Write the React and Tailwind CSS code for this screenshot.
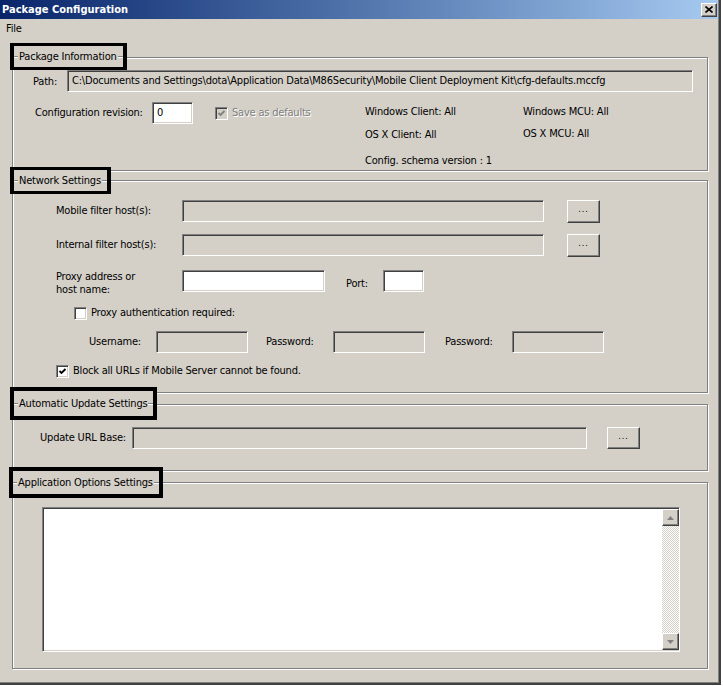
import React from "react";

// classic win2k bevels
const sunken =
    "border border-t-[#808080] border-l-[#808080] border-r-white border-b-white shadow-[inset_1px_1px_0_#404040,inset_-1px_-1px_0_#d4d0c8]";
const raised =
    "border border-t-white border-l-white border-r-[#404040] border-b-[#404040] shadow-[inset_-1px_-1px_0_#808080,inset_1px_1px_0_#d4d0c8]";

function Etch({ className }) {
    return (
        <span
            className={`h-[2px] border-t border-t-[#808080] border-b border-b-white ${className}`}
        />
    );
}

function Group({ title, className, legendClass, children }) {
    return (
        <div
            className={`ml-[12px] w-[696px] shrink-0 border border-[#808080] shadow-[inset_1px_1px_0_#fff,1px_1px_0_#fff] ${className}`}
        >
            {/* legend, boxed in black as in the screenshot */}
            <div
                className={`flex w-fit items-center border-black bg-[#d4d0c8] ${legendClass}`}
            >
                <Etch className="w-[4px]" />
                <span className="px-[1px] leading-[13px]">{title}</span>
                <Etch className="w-[5px]" />
            </div>
            {children}
        </div>
    );
}

function Field({ className, white, children }) {
    return (
        <div
            className={`flex h-[22px] shrink-0 items-center pl-[4px] pt-[1px] ${sunken} ${
                white ? "bg-white" : "bg-[#d4d0c8]"
            } ${className}`}
        >
            {children}
        </div>
    );
}

function Dots({ className }) {
    return (
        <div
            className={`flex w-[33px] shrink-0 items-center justify-center bg-[#d4d0c8] pb-[2px] text-[9px] tracking-[1px] ${raised} ${className}`}
        >
            ...
        </div>
    );
}

function Check({ checked, disabled, className }) {
    return (
        <span
            className={`flex h-[13px] w-[13px] shrink-0 items-center justify-center ${sunken} ${
                disabled ? "bg-[#d4d0c8]" : "bg-white"
            } ${className}`}
        >
            {checked && (
                <svg width="9" height="9" viewBox="0 0 9 9">
                    <polyline
                        points="1.5,4 3.5,6 7.5,2"
                        fill="none"
                        stroke={disabled ? "#808080" : "#000"}
                        strokeWidth="1.8"
                    />
                </svg>
            )}
        </span>
    );
}

function Arrow({ up }) {
    return (
        <div
            className={`flex h-[17px] w-[17px] shrink-0 items-center justify-center bg-[#d4d0c8] ${raised}`}
        >
            <svg width="7" height="4" viewBox="0 0 7 4">
                <polygon
                    points={up ? "0,4 7,4 3.5,0" : "0,0 7,0 3.5,4"}
                    fill="#808080"
                />
            </svg>
        </div>
    );
}

export default function App() {
    return (
        <div className="h-[686px] w-[723px] bg-white font-['DejaVu_Sans_Condensed','DejaVu_Sans',sans-serif] text-[11px] tracking-[-0.2px] text-black">
            <div className="flex h-[685px] w-[721px] flex-col overflow-hidden border-r-2 border-b-2 border-[#404040] bg-[#d4d0c8] shadow-[inset_-1px_-1px_0_#808080]">
                {/* Title bar */}
                <div className="flex h-[19px] w-[718px] shrink-0 items-center justify-between bg-linear-to-r from-[#0a246a] to-[#a6caf0] pl-[2px] pr-[1px]">
                    <span className="pt-[2px] font-bold tracking-normal text-white">
                        Package Configuration
                    </span>
                    <div
                        className={`flex h-[14px] w-[16px] items-center justify-center bg-[#d4d0c8] ${raised}`}
                    >
                        <svg width="8" height="7" viewBox="0 0 8 7">
                            <path
                                d="M0.5 0.5 L7.5 6.5 M7.5 0.5 L0.5 6.5"
                                stroke="#000"
                                strokeWidth="1.6"
                            />
                        </svg>
                    </div>
                </div>

                {/* Menu */}
                <div className="flex h-[19px] shrink-0 items-center pl-[6px] pt-[2px]">
                    File
                </div>

                {/* Package Information */}
                <Group
                    title="Package Information"
                    className="mt-[19px] h-[114px]"
                    legendClass="-mt-[15px] -ml-[3px] h-[27px] border-x-[4px] border-y-[3px]"
                >
                    <div className="flex h-[22px] items-center">
                        <span className="w-[54px] shrink-0 pl-[20px] pt-[2px]">Path:</span>
                        <Field className="w-[626px]">
                            C:\Documents and Settings\dota\Application Data\M86Security\Mobile
                            Client Deployment Kit\cfg-defaults.mccfg
                        </Field>
                    </div>
                    <div className="mt-[10px] flex items-start">
                        <div className="flex h-[22px] w-[352px] shrink-0 items-center">
                            <span className="w-[139px] shrink-0 pl-[22px]">
                                Configuration revision:
                            </span>
                            <Field white className="w-[41px]">
                                0
                            </Field>
                            <Check checked disabled className="ml-[22px]" />
                            <span className="ml-[4px] text-[#808080] [text-shadow:1px_1px_0_#fff]">
                                Save as defaults
                            </span>
                        </div>
                        <div className="mt-[3px] grid grid-cols-[158px_auto] leading-[14px]">
                            <span>Windows Client: All</span>
                            <span>Windows MCU: All</span>
                            <span className="mt-[9px]">OS X Client: All</span>
                            <span className="mt-[8px]">OS X MCU: All</span>
                            <span className="mt-[12px]">
                                Config. schema version : 1
                            </span>
                        </div>
                    </div>
                </Group>

                {/* Network Settings */}
                <Group
                    title="Network Settings"
                    className="mt-[9px] h-[213px]"
                    legendClass="-mt-[14px] -ml-[3px] h-[27px] border-x-[4px] border-y-[3px]"
                >
                    <div className="mt-[6px] flex h-[22px] items-center">
                        <span className="w-[169px] shrink-0 pl-[43px]">
                            Mobile filter host(s):
                        </span>
                        <Field className="w-[362px]" />
                        <Dots className="ml-[23px] h-[23px]" />
                    </div>
                    <div className="mt-[12px] flex h-[22px] items-center">
                        <span className="w-[169px] shrink-0 pl-[43px]">
                            Internal filter host(s):
                        </span>
                        <Field className="w-[362px]" />
                        <Dots className="ml-[23px] h-[23px]" />
                    </div>
                    <div className="mt-[14px] flex h-[22px] items-start">
                        <span className="w-[169px] shrink-0 pl-[43px] leading-[13px]">
                            Proxy address or
                            <br />
                            host name:
                        </span>
                        <Field white className="w-[143px]" />
                        <span className="mt-[6px] ml-[21px] w-[37px] shrink-0">Port:</span>
                        <Field white className="w-[41px]" />
                    </div>
                    <div className="mt-[15px] flex h-[13px] items-center">
                        <Check className="ml-[61px]" />
                        <span className="ml-[4px]">Proxy authentication required:</span>
                    </div>
                    <div className="mt-[11px] flex h-[22px] items-center">
                        <span className="w-[143px] shrink-0 pl-[76px]">Username:</span>
                        <Field className="w-[92px]" />
                        <span className="ml-[18px] w-[67px] shrink-0">Password:</span>
                        <Field className="w-[92px]" />
                        <span className="ml-[20px] w-[67px] shrink-0">Password:</span>
                        <Field className="w-[92px]" />
                    </div>
                    <div className="mt-[12px] flex h-[13px] items-center">
                        <Check checked className="ml-[43px]" />
                        <span className="ml-[4px]">
                            Block all URLs if Mobile Server cannot be found.
                        </span>
                    </div>
                </Group>

                {/* Automatic Update Settings */}
                <Group
                    title="Automatic Update Settings"
                    className="mt-[11px] h-[67px]"
                    legendClass="-mt-[18px] -ml-[3px] h-[33px] border-[4px]"
                >
                    <div className="mt-[7px] flex h-[22px] items-center">
                        <span className="w-[119px] shrink-0 pl-[27px]">
                            Update URL Base:
                        </span>
                        <Field className="w-[455px]" />
                        <Dots className="ml-[20px] h-[22px]" />
                    </div>
                </Group>

                {/* Application Options Settings */}
                <Group
                    title="Application Options Settings"
                    className="mt-[11px] h-[187px]"
                    legendClass="-mt-[16px] -ml-[4px] h-[31px] border-[4px]"
                >
                    <div
                        className={`mt-[9px] ml-[29px] flex h-[145px] w-[638px] bg-white p-[1px] pr-[0px] ${sunken}`}
                    >
                        <div className="flex-1" />
                        <div className="flex w-[17px] flex-col bg-[repeating-conic-gradient(#d4d0c8_0_25%,#fff_0_50%)] bg-[length:2px_2px]">
                            <Arrow up />
                            <div className="flex-1" />
                            <Arrow />
                        </div>
                    </div>
                </Group>
            </div>
        </div>
    );
}
